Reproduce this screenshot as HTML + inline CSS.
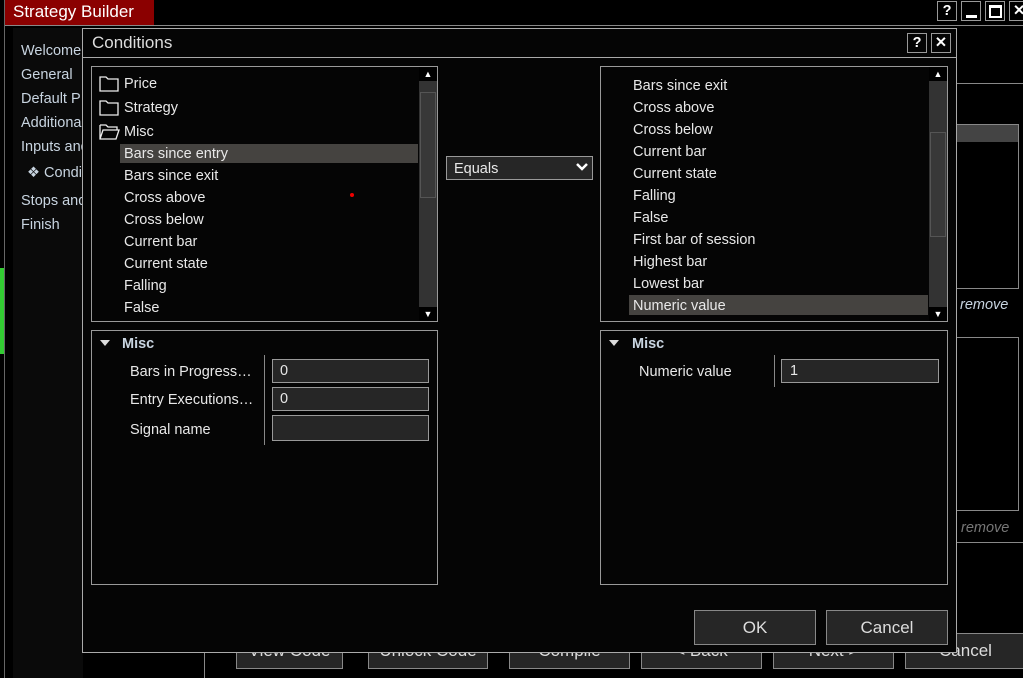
<!DOCTYPE html>
<html><head><meta charset="utf-8"><style>
*{margin:0;padding:0;box-sizing:border-box}
body{width:1023px;height:678px;background:#000;position:relative;overflow:hidden;font-family:"Liberation Sans",sans-serif;font-size:14.5px;color:#e8e8e8}
.a{position:absolute}
.t{position:absolute;white-space:nowrap;line-height:18px}
.b{position:absolute;border:1px solid #999}
.btn{position:absolute;border:1px solid #888;background:#262626;color:#ddd;font-size:17px;text-align:center}
.side{color:#c8d4e0}
.tri{position:absolute;width:0;height:0;border-left:5px solid transparent;border-right:5px solid transparent;border-top:6px solid #ddd}
</style></head><body>
<div class="a" style="left:5px;top:0;width:149px;height:25px;background:#8b0000"></div>
<div class="t" style="left:13px;top:2px;font-size:17px;line-height:20px;color:#fff">Strategy Builder</div>
<div class="a" style="left:5px;top:25px;width:1018px;height:1px;background:#888"></div>
<div class="a" style="left:4px;top:0;width:1px;height:678px;background:#666"></div>
<div class="a" style="left:13px;top:28px;width:70px;height:650px;background:#0a0a0a"></div>
<div class="a" style="left:0;top:268px;width:4px;height:86px;background:#33cc33"></div>
<div class="t side" style="left:21px;top:42px">Welcome</div>
<div class="t side" style="left:21px;top:66px">General</div>
<div class="t side" style="left:21px;top:90px">Default P</div>
<div class="t side" style="left:21px;top:114px">Additional</div>
<div class="t side" style="left:21px;top:138px">Inputs and</div>
<div class="t side" style="left:27px;top:164px">❖ Condi</div>
<div class="t side" style="left:21px;top:192px">Stops and</div>
<div class="t side" style="left:21px;top:216px">Finish</div>
<div class="b" style="left:937px;top:1px;width:20px;height:20px;color:#fff;text-align:center;font-weight:bold;line-height:18px">?</div>
<div class="b" style="left:961px;top:1px;width:20px;height:20px"><div class="a" style="left:4px;top:13px;width:11px;height:3px;background:#fff"></div></div>
<div class="b" style="left:985px;top:1px;width:20px;height:20px"><div class="a" style="left:3px;top:3px;width:13px;height:13px;border:2px solid #fff;border-top-width:3px"></div></div>
<div class="b" style="left:1009px;top:1px;width:20px;height:20px;color:#fff;font-weight:bold;line-height:18px;padding-left:3px">✕</div>
<div class="a" style="left:956px;top:83px;width:67px;height:1px;background:#888"></div>
<div class="b" style="left:956px;top:124px;width:63px;height:165px;border-color:#888"></div>
<div class="a" style="left:957px;top:125px;width:61px;height:17px;background:#444"></div>
<div class="t" style="left:960px;top:296px;font-style:italic;color:#c8d4e0">remove</div>
<div class="b" style="left:956px;top:337px;width:63px;height:174px;border-color:#888"></div>
<div class="t" style="left:961px;top:519px;font-style:italic;color:#777">remove</div>
<div class="a" style="left:956px;top:542px;width:67px;height:1px;background:#888"></div>
<div class="a" style="left:204px;top:652px;width:1px;height:26px;background:#888"></div>
<div class="btn" style="left:236px;top:633px;width:107px;height:36px;line-height:34px">View Code</div>
<div class="btn" style="left:368px;top:633px;width:120px;height:36px;line-height:34px">Unlock Code</div>
<div class="btn" style="left:509px;top:633px;width:121px;height:36px;line-height:34px">Compile</div>
<div class="btn" style="left:641px;top:633px;width:121px;height:36px;line-height:34px">&lt; Back</div>
<div class="btn" style="left:773px;top:633px;width:121px;height:36px;line-height:34px">Next &gt;</div>
<div class="btn" style="left:905px;top:633px;width:121px;height:36px;line-height:34px">Cancel</div>
<div class="a" style="left:82px;top:28px;width:875px;height:625px;background:#050505;border:1px solid #aaa"></div>
<div class="t" style="left:92px;top:33px;font-size:17px;line-height:20px;color:#ddd">Conditions</div>
<div class="a" style="left:83px;top:57px;width:873px;height:1px;background:#aaa"></div>
<div class="b" style="left:907px;top:33px;width:20px;height:20px;color:#fff;text-align:center;font-weight:bold;line-height:18px">?</div>
<div class="b" style="left:931px;top:33px;width:20px;height:20px;color:#fff;text-align:center;font-weight:bold;line-height:18px">✕</div>
<div class="b" style="left:91px;top:66px;width:347px;height:256px;background:#050505"></div>
<div class="a" style="left:419px;top:67px;width:18px;height:254px;background:#333"></div>
<div class="a" style="left:419px;top:67px;width:18px;height:14px;background:#000;color:#fff;font-size:9px;text-align:center;line-height:14px">▲</div>
<div class="a" style="left:419px;top:307px;width:18px;height:14px;background:#000;color:#fff;font-size:9px;text-align:center;line-height:14px">▼</div>
<div class="a" style="left:420px;top:92px;width:16px;height:106px;border:1px solid #555;background:#383838"></div>
<svg class="a" style="left:99px;top:75px" width="22" height="66"><g fill="none" stroke="#eee" stroke-width="1.3"><path d="M1 2h6l2 2h10v12H1z"/><path d="M1 26h6l2 2h10v12H1z"/><path d="M1 50h6l2 2h9v3M1 50v14h16l3-9H4l-3 9"/></g></svg>
<div class="t" style="left:124px;top:75px">Price</div>
<div class="t" style="left:124px;top:99px">Strategy</div>
<div class="t" style="left:124px;top:123px">Misc</div>
<div class="a" style="left:120px;top:144px;width:298px;height:19px;background:#454340"></div>
<div class="t" style="left:124px;top:145px">Bars since entry</div>
<div class="t" style="left:124px;top:167px">Bars since exit</div>
<div class="t" style="left:124px;top:189px">Cross above</div>
<div class="t" style="left:124px;top:211px">Cross below</div>
<div class="t" style="left:124px;top:233px">Current bar</div>
<div class="t" style="left:124px;top:255px">Current state</div>
<div class="t" style="left:124px;top:277px">Falling</div>
<div class="t" style="left:124px;top:299px">False</div>
<div class="a" style="left:350px;top:193px;width:4px;height:4px;border-radius:2px;background:#e00"></div>
<div class="b" style="left:446px;top:156px;width:147px;height:24px;background:#262626"></div>
<div class="t" style="left:454px;top:160px">Equals</div>
<svg class="a" style="left:576px;top:162px" width="13" height="10"><path d="M1 2l5 5 5-5" fill="none" stroke="#fff" stroke-width="2.5"/></svg>
<div class="b" style="left:600px;top:66px;width:348px;height:256px;background:#050505"></div>
<div class="a" style="left:929px;top:67px;width:18px;height:254px;background:#333"></div>
<div class="a" style="left:929px;top:67px;width:18px;height:14px;background:#000;color:#fff;font-size:9px;text-align:center;line-height:14px">▲</div>
<div class="a" style="left:929px;top:307px;width:18px;height:14px;background:#000;color:#fff;font-size:9px;text-align:center;line-height:14px">▼</div>
<div class="a" style="left:930px;top:132px;width:16px;height:105px;border:1px solid #555;background:#383838"></div>
<div class="t" style="left:633px;top:77px">Bars since exit</div>
<div class="t" style="left:633px;top:99px">Cross above</div>
<div class="t" style="left:633px;top:121px">Cross below</div>
<div class="t" style="left:633px;top:143px">Current bar</div>
<div class="t" style="left:633px;top:165px">Current state</div>
<div class="t" style="left:633px;top:187px">Falling</div>
<div class="t" style="left:633px;top:209px">False</div>
<div class="t" style="left:633px;top:231px">First bar of session</div>
<div class="t" style="left:633px;top:253px">Highest bar</div>
<div class="t" style="left:633px;top:275px">Lowest bar</div>
<div class="a" style="left:629px;top:295px;width:299px;height:20px;background:#454340"></div>
<div class="t" style="left:633px;top:297px">Numeric value</div>
<div class="b" style="left:91px;top:330px;width:347px;height:255px"></div>
<div class="tri" style="left:100px;top:340px"></div>
<div class="t" style="left:122px;top:335px;font-weight:bold;color:#c8d4e0">Misc</div>
<div class="a" style="left:264px;top:355px;width:1px;height:90px;background:#888"></div>
<div class="t" style="left:130px;top:363px">Bars in Progress…</div>
<div class="t" style="left:130px;top:391px">Entry Executions…</div>
<div class="t" style="left:130px;top:421px">Signal name</div>
<div class="b" style="left:272px;top:359px;width:157px;height:24px;background:#262626;padding-left:7px;line-height:22px">0</div>
<div class="b" style="left:272px;top:387px;width:157px;height:24px;background:#262626;padding-left:7px;line-height:22px">0</div>
<div class="b" style="left:272px;top:415px;width:157px;height:26px;background:#262626"></div>
<div class="b" style="left:600px;top:330px;width:348px;height:255px"></div>
<div class="tri" style="left:609px;top:340px"></div>
<div class="t" style="left:632px;top:335px;font-weight:bold;color:#c8d4e0">Misc</div>
<div class="a" style="left:774px;top:355px;width:1px;height:32px;background:#888"></div>
<div class="t" style="left:639px;top:363px">Numeric value</div>
<div class="b" style="left:781px;top:359px;width:158px;height:24px;background:#262626;padding-left:8px;line-height:22px">1</div>
<div class="btn" style="left:694px;top:610px;width:122px;height:35px;line-height:33px">OK</div>
<div class="btn" style="left:826px;top:610px;width:122px;height:35px;line-height:33px">Cancel</div>
</body></html>
